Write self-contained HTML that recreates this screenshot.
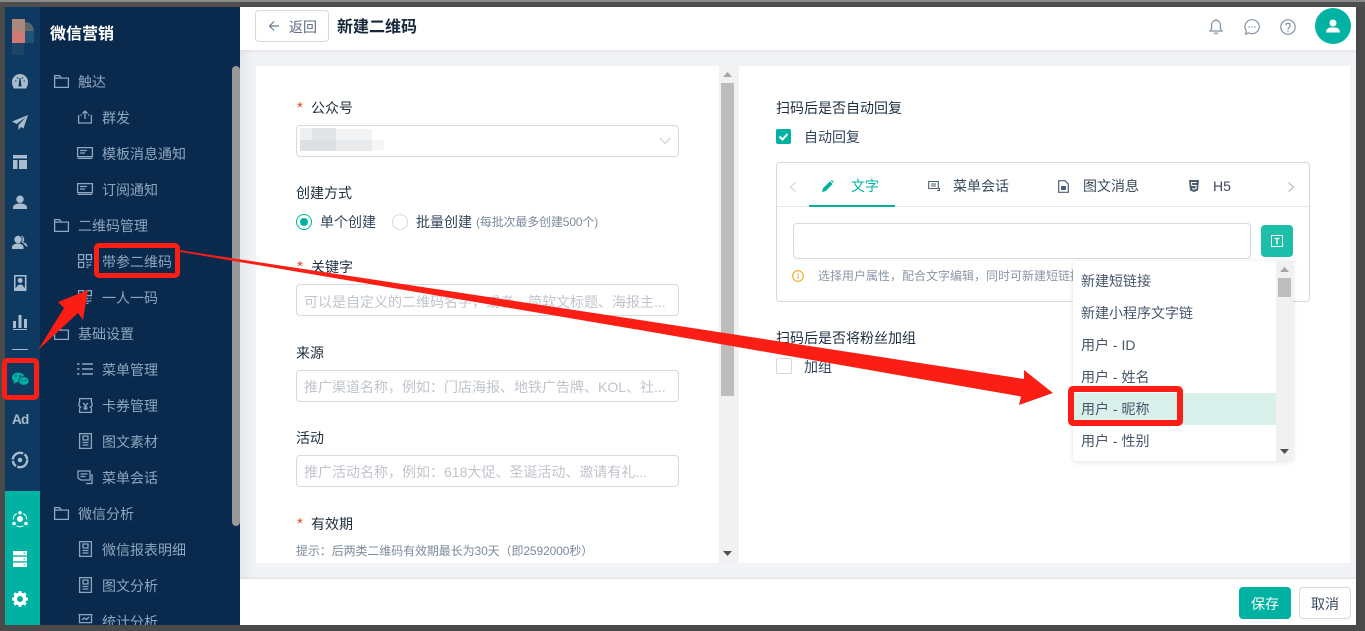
<!DOCTYPE html>
<html lang="zh"><head><meta charset="utf-8"><title>微信营销</title>
<style>
html,body{margin:0;padding:0;width:1365px;height:631px;overflow:hidden;background:#4a4a4a}
body{position:relative;font-family:"Liberation Sans","Noto Sans CJK SC",sans-serif;font-size:14px;color:#26384c}
div,span,svg{position:absolute;box-sizing:border-box}
.t{white-space:nowrap;line-height:20px;height:20px;margin-top:1px}
.nav{color:#8ea6bf}
.lab{color:#1e2d3d}
.req{color:#e8451c;font-size:15px}
.inp{left:296px;width:383px;height:32px;border:1px solid #d5d9e0;border-radius:4px;background:#fff}
.ph{color:#c0c4cc;left:304px}
.rb{border:5px solid #fb1e14;border-radius:5px}
.dd{left:1081px;color:#46566a}
svg{overflow:visible}
.ni{fill:none;stroke:#8ea6bf;stroke-width:1.3}
.ri{fill:#a9bccd}
</style></head><body>
<div style="left:0;top:0;width:1365px;height:2px;background:#8a8a8a"></div>
<div style="left:0;top:2px;width:1365px;height:5px;background:#4e4e4e"></div>

<!-- main -->
<div style="left:240px;top:7px;width:1116px;height:618px;background:#f1f3f7"></div>
<div style="left:240px;top:7px;width:14px;height:618px;background:linear-gradient(90deg,#e6e8ec,#f1f3f7)"></div>
<div style="left:240px;top:7px;width:1116px;height:43px;background:#fff;box-shadow:0 1px 4px rgba(0,0,0,.08)"></div>
<div style="left:255px;top:10px;width:74px;height:32px;background:#fff;border:1px solid #d5d9e0;border-radius:4px"></div>
<svg style="left:268px;top:20px" width="12" height="12" viewBox="0 0 12 12"><path d="M11 6H1.5M6 1.5L1.5 6 6 10.5" fill="none" stroke="#6b7b8c" stroke-width="1.2"/></svg>
<span class="t" style="left:289px;top:16px;color:#5d6d7e;font-size:14px">返回</span>
<span class="t" style="left:337px;top:17px;font-size:16px;font-weight:700;color:#17283a">新建二维码</span>

<!-- header icons -->
<svg style="left:1208px;top:18px" width="16" height="17" viewBox="0 0 16 17"><path d="M2 13h12l-1.6-2.2V7A4.4 4.4 0 0 0 8 2.4 4.4 4.4 0 0 0 3.600 7v3.800zM8 1v1.400M6.500 14.500a1.600 1.600 0 0 0 3 0" fill="none" stroke="#8592a3" stroke-width="1.2"/></svg>
<svg style="left:1244px;top:19px" width="16" height="16" viewBox="0 0 16 16"><path d="M8 .7a7.300 7 0 1 1-3.400 13.200L1.500 15l.8-3.200A7 7 0 0 1 8 .7z" fill="none" stroke="#8592a3" stroke-width="1.200"/><path d="M4.500 8h1.300M7.400 8h1.300M10.300 8h1.300" stroke="#8592a3" stroke-width="1.300"/></svg>
<svg style="left:1280px;top:19px" width="16" height="16" viewBox="0 0 16 16"><circle cx="8" cy="8" r="7.200" fill="none" stroke="#8592a3" stroke-width="1.200"/><path d="M5.800 6.200A2.200 2.200 0 1 1 8.800 8.500C8.200 9 8 9.500 8 10.500M8 11.500v1.200" fill="none" stroke="#8592a3" stroke-width="1.200"/></svg>
<div style="left:1315px;top:8px;width:36px;height:36px;border-radius:50%;background:#00b2a2"></div>
<svg style="left:1326px;top:19px" width="14" height="14" viewBox="0 0 14 14"><circle cx="7" cy="4" r="3.500" fill="#fff"/><path d="M0 13.500c0-3.500 3-5 4.500-5h5c1.500 0 4.500 1.500 4.500 5z" fill="#fff"/></svg>

<!-- left panel -->
<div style="left:256px;top:66px;width:463px;height:497px;background:#fff"></div>
<div style="left:719px;top:66px;width:17px;height:497px;background:#f1f1f1"></div>
<div style="left:721px;top:83px;width:13px;height:313px;background:#bdbdbd"></div>
<svg style="left:723px;top:72px" width="9" height="6"><path d="M4.500 0L9 5H0z" fill="#a5a5a5"/></svg>
<svg style="left:723px;top:551px" width="9" height="6"><path d="M0 0h9L4.500 5z" fill="#505050"/></svg>

<span class="t req" style="left:297px;top:97px">*</span>
<span class="t lab" style="left:311px;top:97px">公众号</span>
<div class="inp" style="top:125px"></div>
<div style="left:300px;top:128px;width:12px;height:12px;background:#eceef0"></div>
<div style="left:312px;top:128px;width:24px;height:12px;background:#e2e4e8"></div>
<div style="left:336px;top:129px;width:36px;height:11px;background:#f2f3f4"></div>
<div style="left:300px;top:140px;width:36px;height:11px;background:#dcdfe3"></div>
<div style="left:336px;top:140px;width:36px;height:11px;background:#e8eaec"></div>
<div style="left:372px;top:140px;width:12px;height:10px;background:#f5f6f7"></div>
<svg style="left:659px;top:137px" width="12" height="8"><path d="M1 1l5 5.500L11 1" fill="none" stroke="#c5cad1" stroke-width="1"/></svg>

<span class="t lab" style="left:296px;top:182px">创建方式</span>
<div style="left:296px;top:214px;width:16px;height:16px;border:1.500px solid #00b2a2;border-radius:50%"></div>
<div style="left:300px;top:218px;width:8px;height:8px;background:#00b2a2;border-radius:50%"></div>
<span class="t" style="left:320px;top:211px;color:#33445a">单个创建</span>
<div style="left:392px;top:214px;width:16px;height:16px;border:1px solid #d5d9e0;border-radius:50%"></div>
<span class="t" style="left:416px;top:211px;color:#33445a">批量创建</span>
<span class="t" style="left:476px;top:211px;font-size:12px;letter-spacing:-.15px;color:#7d8b9c">(每批次最多创建500个)</span>

<span class="t req" style="left:297px;top:256px">*</span>
<span class="t lab" style="left:311px;top:256px">关键字</span>
<div class="inp" style="top:284px"></div>
<span class="t ph" style="top:291px">可以是自定义的二维码名字，或者，简软文标题、海报主...</span>

<span class="t lab" style="left:296px;top:342px">来源</span>
<div class="inp" style="top:370px"></div>
<span class="t ph" style="top:376px">推广渠道名称，例如：门店海报、地铁广告牌、KOL、社...</span>

<span class="t lab" style="left:296px;top:427px">活动</span>
<div class="inp" style="top:455px"></div>
<span class="t ph" style="top:461px">推广活动名称，例如：618大促、圣诞活动、邀请有礼...</span>

<span class="t req" style="left:297px;top:513px">*</span>
<span class="t lab" style="left:311px;top:513px">有效期</span>
<span class="t" style="left:296px;top:540px;font-size:12px;letter-spacing:-.1px;color:#7d8b9c">提示：后两类二维码有效期最长为30天（即2592000秒）</span>

<!-- right panel -->
<div style="left:739px;top:66px;width:611px;height:497px;background:#fff"></div>
<span class="t lab" style="left:776px;top:97px">扫码后是否自动回复</span>
<div style="left:776px;top:129px;width:15px;height:15px;background:#00b2a2;border-radius:2px"></div>
<svg style="left:776px;top:129px" width="15" height="15"><path d="M3.500 7.500l3 3 5-5.500" fill="none" stroke="#fff" stroke-width="2"/></svg>
<span class="t" style="left:804px;top:126px;color:#33445a">自动回复</span>

<div style="left:776px;top:162px;width:534px;height:140px;border:1px solid #d5d9e0;border-radius:4px"></div>
<div style="left:777px;top:206px;width:532px;height:1px;background:#e4e7eb"></div>
<div style="left:809px;top:205px;width:86px;height:2px;background:#00b2a2"></div>
<svg style="left:789px;top:182px" width="8" height="10"><path d="M6.500 .5L1.500 5l5 4.500" fill="none" stroke="#c9ced5" stroke-width="1"/></svg>
<svg style="left:1287px;top:182px" width="8" height="10"><path d="M1.500 .5l5 4.500-5 4.500" fill="none" stroke="#a6aeb8" stroke-width="1"/></svg>
<svg style="left:822px;top:180px" width="12" height="12" viewBox="0 0 12 12"><path d="M0 12l.8-3.500L8 1.300 10.700 4 3.500 11.200zM8.800.5l1-.5 2 2-.5 1z" fill="#00b2a2"/></svg>
<span class="t" style="left:851px;top:175px;color:#00b2a2;font-size:14px">文字</span>
<svg style="left:928px;top:180px" width="12" height="12" viewBox="0 0 12 12"><path d="M.7 1.500h9.600v7H.7zM3 4h5M3 6h5M9 10.500h2.500V8" fill="none" stroke="#4d5d70" stroke-width="1.100"/></svg>
<span class="t" style="left:953px;top:175px;font-size:14px;color:#3b4b5e">菜单会话</span>
<svg style="left:1058px;top:180px" width="11" height="13" viewBox="0 0 11 13"><path d="M.7.700h6.300l3.300 3.300v8.300H.7z" fill="none" stroke="#4d5d70" stroke-width="1.200"/><path d="M3 6h5v4H3z" fill="#4d5d70"/></svg>
<span class="t" style="left:1083px;top:175px;font-size:14px;color:#3b4b5e">图文消息</span>
<svg style="left:1189px;top:180px" width="10" height="12" viewBox="0 0 10 12"><path d="M0 0h10l-1 10.500L5 12 1 10.500z" fill="#4d5d70"/><path d="M7.500 2.500h-5l.3 3h4.400l-.3 3-1.900.7-1.900-.7" fill="none" stroke="#fff" stroke-width="1"/></svg>
<span class="t" style="left:1213px;top:175px;font-size:14px;color:#3b4b5e">H5</span>

<div style="left:793px;top:223px;width:458px;height:36px;border:1px solid #d5d9e0;border-radius:4px;background:#fff"></div>
<div style="left:1261px;top:225px;width:32px;height:32px;background:#1dbfab;border-radius:4px"></div>
<div style="left:1271px;top:235px;width:12px;height:12px;border:1px solid #fff"></div>
<svg style="left:1271px;top:235px" width="12" height="12"><path d="M3.500 3.500h5M6 3.500V9.500" fill="none" stroke="#fff" stroke-width="1.300"/></svg>
<svg style="left:792px;top:270px" width="12" height="12"><circle cx="6" cy="6" r="5.300" fill="none" stroke="#f5a623" stroke-width="1.100"/><path d="M6 3v1.200M6 5.200V9" stroke="#f5a623" stroke-width="1.100"/></svg>
<span class="t" style="left:818px;top:265px;font-size:12px;color:#8b97a5">选择用户属性，配合文字编辑，同时可新建短链接</span>

<span class="t lab" style="left:776px;top:327px">扫码后是否将粉丝加组</span>
<div style="left:776px;top:358px;width:16px;height:16px;border:1px solid #d5d9e0;border-radius:2px;background:#fff"></div>
<span class="t" style="left:804px;top:356px;color:#33445a">加组</span>

<!-- dropdown -->
<div style="left:1073px;top:261px;width:220px;height:200px;background:#fff;border-radius:4px;box-shadow:0 1px 6px rgba(0,0,0,.12)"></div>
<div style="left:1073px;top:393px;width:203px;height:32px;background:#d9f0eb"></div>
<div style="left:1276px;top:261px;width:17px;height:200px;background:#f1f1f1"></div>
<div style="left:1278px;top:278px;width:13px;height:19px;background:#bdbdbd"></div>
<svg style="left:1280px;top:267px" width="9" height="6"><path d="M4.500 0L9 5H0z" fill="#a5a5a5"/></svg>
<svg style="left:1280px;top:449px" width="9" height="6"><path d="M0 0h9L4.500 5z" fill="#505050"/></svg>
<span class="t dd" style="top:270px">新建短链接</span>
<span class="t dd" style="top:302px">新建小程序文字链</span>
<span class="t dd" style="top:334px">用户 - ID</span>
<span class="t dd" style="top:366px">用户 - 姓名</span>
<span class="t dd" style="top:398px">用户 - 昵称</span>
<span class="t dd" style="top:430px">用户 - 性别</span>

<!-- footer -->
<div style="left:240px;top:579px;width:1116px;height:46px;background:#fff;box-shadow:0 -1px 3px rgba(0,0,0,.08)"></div>
<div style="left:1239px;top:587px;width:52px;height:32px;background:#00b2a2;border-radius:4px;color:#fff;text-align:center;line-height:34px">保存</div>
<div style="left:1299px;top:587px;width:52px;height:32px;background:#fff;border:1px solid #d5d9e0;border-radius:4px;color:#3b4b5e;text-align:center;line-height:32px">取消</div>

<!-- sidebar -->
<div style="left:40px;top:7px;width:200px;height:618px;background:#0a2a4d;overflow:hidden">
  <span class="t" style="left:10px;top:17px;font-size:16px;font-weight:700;color:#fff">微信营销</span>
  <span class="t nav" style="left:38px;top:64px">触达</span>
  <span class="t nav" style="left:62px;top:100px">群发</span>
  <span class="t nav" style="left:62px;top:136px">模板消息通知</span>
  <span class="t nav" style="left:62px;top:172px">订阅通知</span>
  <span class="t nav" style="left:38px;top:208px">二维码管理</span>
  <span class="t nav" style="left:62px;top:244px">带参二维码</span>
  <span class="t nav" style="left:62px;top:280px">一人一码</span>
  <span class="t nav" style="left:38px;top:316px">基础设置</span>
  <span class="t nav" style="left:62px;top:352px">菜单管理</span>
  <span class="t nav" style="left:62px;top:388px">卡券管理</span>
  <span class="t nav" style="left:62px;top:424px">图文素材</span>
  <span class="t nav" style="left:62px;top:460px">菜单会话</span>
  <span class="t nav" style="left:38px;top:496px">微信分析</span>
  <span class="t nav" style="left:62px;top:532px">微信报表明细</span>
  <span class="t nav" style="left:62px;top:568px">图文分析</span>
  <span class="t nav" style="left:62px;top:604px">统计分析</span>
</div>
<div style="left:232px;top:66px;width:8px;height:460px;background:#999;border-radius:4px"></div>

<!-- nav icons -->
<svg class="ni" style="left:54px;top:75px" width="15" height="13"><path d="M.6.600h5l1.500 2.500h7.300v9.300H.6zM.6 3.100h6.500"/></svg>
<svg class="ni" style="left:54px;top:219px" width="15" height="13"><path d="M.6.600h5l1.500 2.500h7.300v9.300H.6zM.6 3.100h6.500"/></svg>
<svg class="ni" style="left:54px;top:327px" width="15" height="13"><path d="M.6.600h5l1.500 2.500h7.300v9.300H.6zM.6 3.100h6.500"/></svg>
<svg class="ni" style="left:54px;top:507px" width="15" height="13"><path d="M.6.600h5l1.500 2.500h7.300v9.300H.6zM.6 3.100h6.500"/></svg>
<svg class="ni" style="left:78px;top:110px" width="14" height="14"><path d="M.6 5v8h12.800V5M7 9V1M4.500 3.500L7 1l2.500 2.500M2.500 5h1.500M10 5h1.500"/></svg>
<svg class="ni" style="left:77px;top:147px" width="16" height="12"><path d="M.6.600h14.800v9H.6zM3 3.500h7M3 6h5M.6 11.400h14.800"/></svg>
<svg class="ni" style="left:77px;top:183px" width="16" height="12"><path d="M.6.600h14.800v9H.6zM3 3.500h7M3 6h5M.6 11.400h14.800"/></svg>
<svg class="ni" style="left:78px;top:254px" width="14" height="14"><path d="M.6.600h5v5H.6zM8.400.600h5v5h-5zM.6 8.400h5v5H.6zM8.400 8.400h2M12 8.400h1.400M8.400 11h5M8.400 13.400h2"/></svg>
<svg class="ni" style="left:78px;top:290px" width="14" height="14"><path d="M.6.600h5v5H.6zM8.400.600h5v5h-5zM.6 8.400h5v5H.6zM8.400 8.400h2M12 8.400h1.400M8.400 11h5M8.400 13.400h2"/></svg>
<svg class="ni" style="left:77px;top:363px" width="16" height="12"><path d="M0 1h2.500M5 1h11M0 6h2.500M5 6h11M0 11h2.500M5 11h11" stroke-width="1.500"/></svg>
<svg class="ni" style="left:79px;top:398px" width="13" height="15"><path d="M.6.600h11.800v3.500a2.500 3 0 0 1-1 5 2 2 0 0 1 1 1.500v3.800H.6v-3.800a2 2 0 0 1 1-1.500 2.500 3 0 0 1-1-5zM4 5l2.500 2.500L9 5M6.500 7.500V12M4.500 9h4M4.500 10.800h4"/></svg>
<svg class="ni" style="left:79px;top:433px" width="13" height="16"><path d="M.6.600h11.800v14.800H.6zM4 3h5v4H4zM3.500 9.500h6M3.500 12h6"/></svg>
<svg class="ni" style="left:77px;top:470px" width="16" height="14"><path d="M1 1h12v9H4L1 8zM3.500 4h7M3.500 6.500h5M15 4v9.500h-6"/></svg>
<svg class="ni" style="left:79px;top:541px" width="13" height="16"><path d="M.6.600h11.800v14.800H.6zM4 3h5v4H4zM3.500 9.500h6M3.500 12h6"/></svg>
<svg class="ni" style="left:79px;top:577px" width="13" height="16"><path d="M.6.600h11.800v14.800H.6zM4 3h5v4H4zM3.500 9.500h6M3.500 12h6"/></svg>
<svg class="ni" style="left:78px;top:614px" width="15" height="11"><path d="M.5.600h14M1.500.600v8h12v-8M4 6l2.500-2 2 1.500L11 3"/></svg>

<!-- rail -->
<div style="left:5px;top:7px;width:35px;height:484px;background:#0e3a61"></div>
<div style="left:5px;top:491px;width:35px;height:134px;background:#00b2a2"></div>
<div style="left:12px;top:19px;width:13px;height:12px;background:#a9897a"></div>
<div style="left:25px;top:22px;width:9px;height:9px;background:#5e6468;border-top-right-radius:9px"></div>
<div style="left:12px;top:31px;width:13px;height:12px;background:#d07a76"></div>
<div style="left:25px;top:31px;width:9px;height:12px;background:#1f5475"></div>
<div style="left:12px;top:43px;width:12px;height:12px;background:#1c4567"></div>

<svg class="ri" style="left:12px;top:74px" width="16" height="15" viewBox="0 0 16 15"><path d="M8 0a8 8 0 0 1 8 8c0 2.500-.8 4.500-2 6.500H2C.8 12.500 0 10.500 0 8a8 8 0 0 1 8-8z"/><path d="M8 4l-1 8h2zM3 7h1.500M11.500 7H13M5 3.500l1 1M11 3.500l-1 1" stroke="#0e3a61" fill="#0e3a61"/></svg>
<svg class="ri" style="left:12px;top:115px" width="16" height="15" viewBox="0 0 16 15"><path d="M16 0L0 6.500 4.500 9 14 2 6.500 10v5l2.500-3 2.500 1.500z"/></svg>
<svg class="ri" style="left:13px;top:155px" width="14" height="14"><path d="M0 0h14v3.500H0zM0 5h4.500v9H0zM6 5h8v9H6z"/></svg>
<svg class="ri" style="left:13px;top:195px" width="14" height="14"><circle cx="7" cy="4.200" r="3.700"/><path d="M0 14v-2c0-1.800 3-3 5-3.500h4c2 .5 5 1.700 5 3.500v2z"/></svg>
<svg class="ri" style="left:12px;top:235px" width="16" height="14"><circle cx="6" cy="4.500" r="3.700"/><path d="M0 14v-2c0-1.800 2.500-3 4.500-3.500h3c2 .5 4 1.700 4 3.500v2z"/><path d="M9 .8a3.800 3.800 0 0 1 2 6.500c2 .5 4.500 1.700 4.500 4.700l-2.500-1.500c-.5-1.500-2-2.500-3.500-3a4.500 4.500 0 0 0 1-3.500c0-1.500-.5-2-1.500-2.700z"/></svg>
<svg class="ri" style="left:14px;top:275px" width="12" height="16"><path fill-rule="evenodd" d="M0 0h12.500v16H0zM1.500 1.500v11.500l1.500-1.500c.5-1.500 2-2 3.200-2s2.700.5 3.200 2l1.500 1.500V1.500zM6.200 3a2.500 2.500 0 1 1 0 5 2.500 2.500 0 0 1 0-5z"/></svg>
<svg class="ri" style="left:13px;top:315px" width="14" height="14"><path d="M0 6h3v7H0zM5.500 0h3v13h-3zM11 4h3v9h-3zM0 14h14v1H0z"/></svg>
<div style="left:12px;top:349px;width:16px;height:1px;background:#a9bccd"></div>
<svg style="left:12px;top:372px" width="17" height="15" viewBox="0 0 17 15"><ellipse cx="6.200" cy="5.500" rx="6.200" ry="5" fill="#00b2a2"/><path d="M2 9l-.5 3 3-2z" fill="#00b2a2"/><ellipse cx="11.800" cy="9" rx="5.200" ry="4.300" fill="#00b2a2" stroke="#0e3a61" stroke-width=".8"/><circle cx="4" cy="4" r=".9" fill="#0e3a61"/><circle cx="8" cy="4" r=".9" fill="#0e3a61"/><circle cx="10" cy="8.500" r=".8" fill="#0e3a61"/><circle cx="13.500" cy="8.500" r=".8" fill="#0e3a61"/></svg>
<span class="t" style="left:12px;top:409px;font-size:13.500px;letter-spacing:-.8px;font-weight:700;color:#a9bccd">Ad</span>
<svg style="left:11px;top:451px" width="18" height="18" viewBox="0 0 18 18"><circle cx="9" cy="9" r="7.200" fill="none" stroke="#a9bccd" stroke-width="2.400" stroke-dasharray="14 1.500 6 1.500"/><circle cx="9" cy="9" r="2.300" fill="#a9bccd"/></svg>
<svg style="left:12px;top:511px" width="16" height="16" viewBox="0 0 16 16"><circle cx="8" cy="8" r="3" fill="#fff"/><circle cx="8" cy="1.800" r="1.800" fill="#fff"/><circle cx="2" cy="12.500" r="1.800" fill="#fff"/><circle cx="14" cy="12.500" r="1.800" fill="#fff"/><path d="M4.800 2.500A6.800 6.800 0 0 0 1.200 8.500M11.200 2.500a6.800 6.800 0 0 1 3.600 6M4.500 14.800a7 7 0 0 0 7 0" fill="none" stroke="#fff" stroke-width="1"/></svg>
<svg style="left:13px;top:551px" width="14" height="16"><path d="M0 0h14v4.400H0zM0 5.800h14v4.400H0zM0 11.600h14V16H0z" fill="#fff"/><path d="M10.500 2.200h1.500M10.500 8h1.500M10.500 13.800h1.500" stroke="#00b2a2"/></svg>
<svg style="left:12px;top:591px" width="16" height="16" viewBox="0 0 16 16"><circle cx="8" cy="8" r="4.700" fill="none" stroke="#fff" stroke-width="3.500"/><path d="M8 0v3M8 13v3M0 8h3M13 8h3M2.300 2.300l2.200 2.200M11.500 11.500l2.200 2.200M2.300 13.700l2.200-2.200M11.500 4.500l2.200-2.200" stroke="#fff" stroke-width="3"/></svg>

<!-- annotations -->
<svg style="left:0;top:0" width="1365" height="631">
<path d="M175 249.500L640 320 1024 379 1024 370 1053 393 1019 405 1021 396.500 640 330 175 251z" fill="#fb1e14"/>
<path d="M38 350L64 308 58 302 88 290 83 320 78 313z" fill="#fb1e14"/>
</svg>
<div class="rb" style="left:94px;top:243px;width:86px;height:35px"></div>
<div class="rb" style="left:2px;top:358px;width:37px;height:42px"></div>
<div class="rb" style="left:1068px;top:386px;width:115px;height:40px;border-width:6px"></div>
</body></html>
